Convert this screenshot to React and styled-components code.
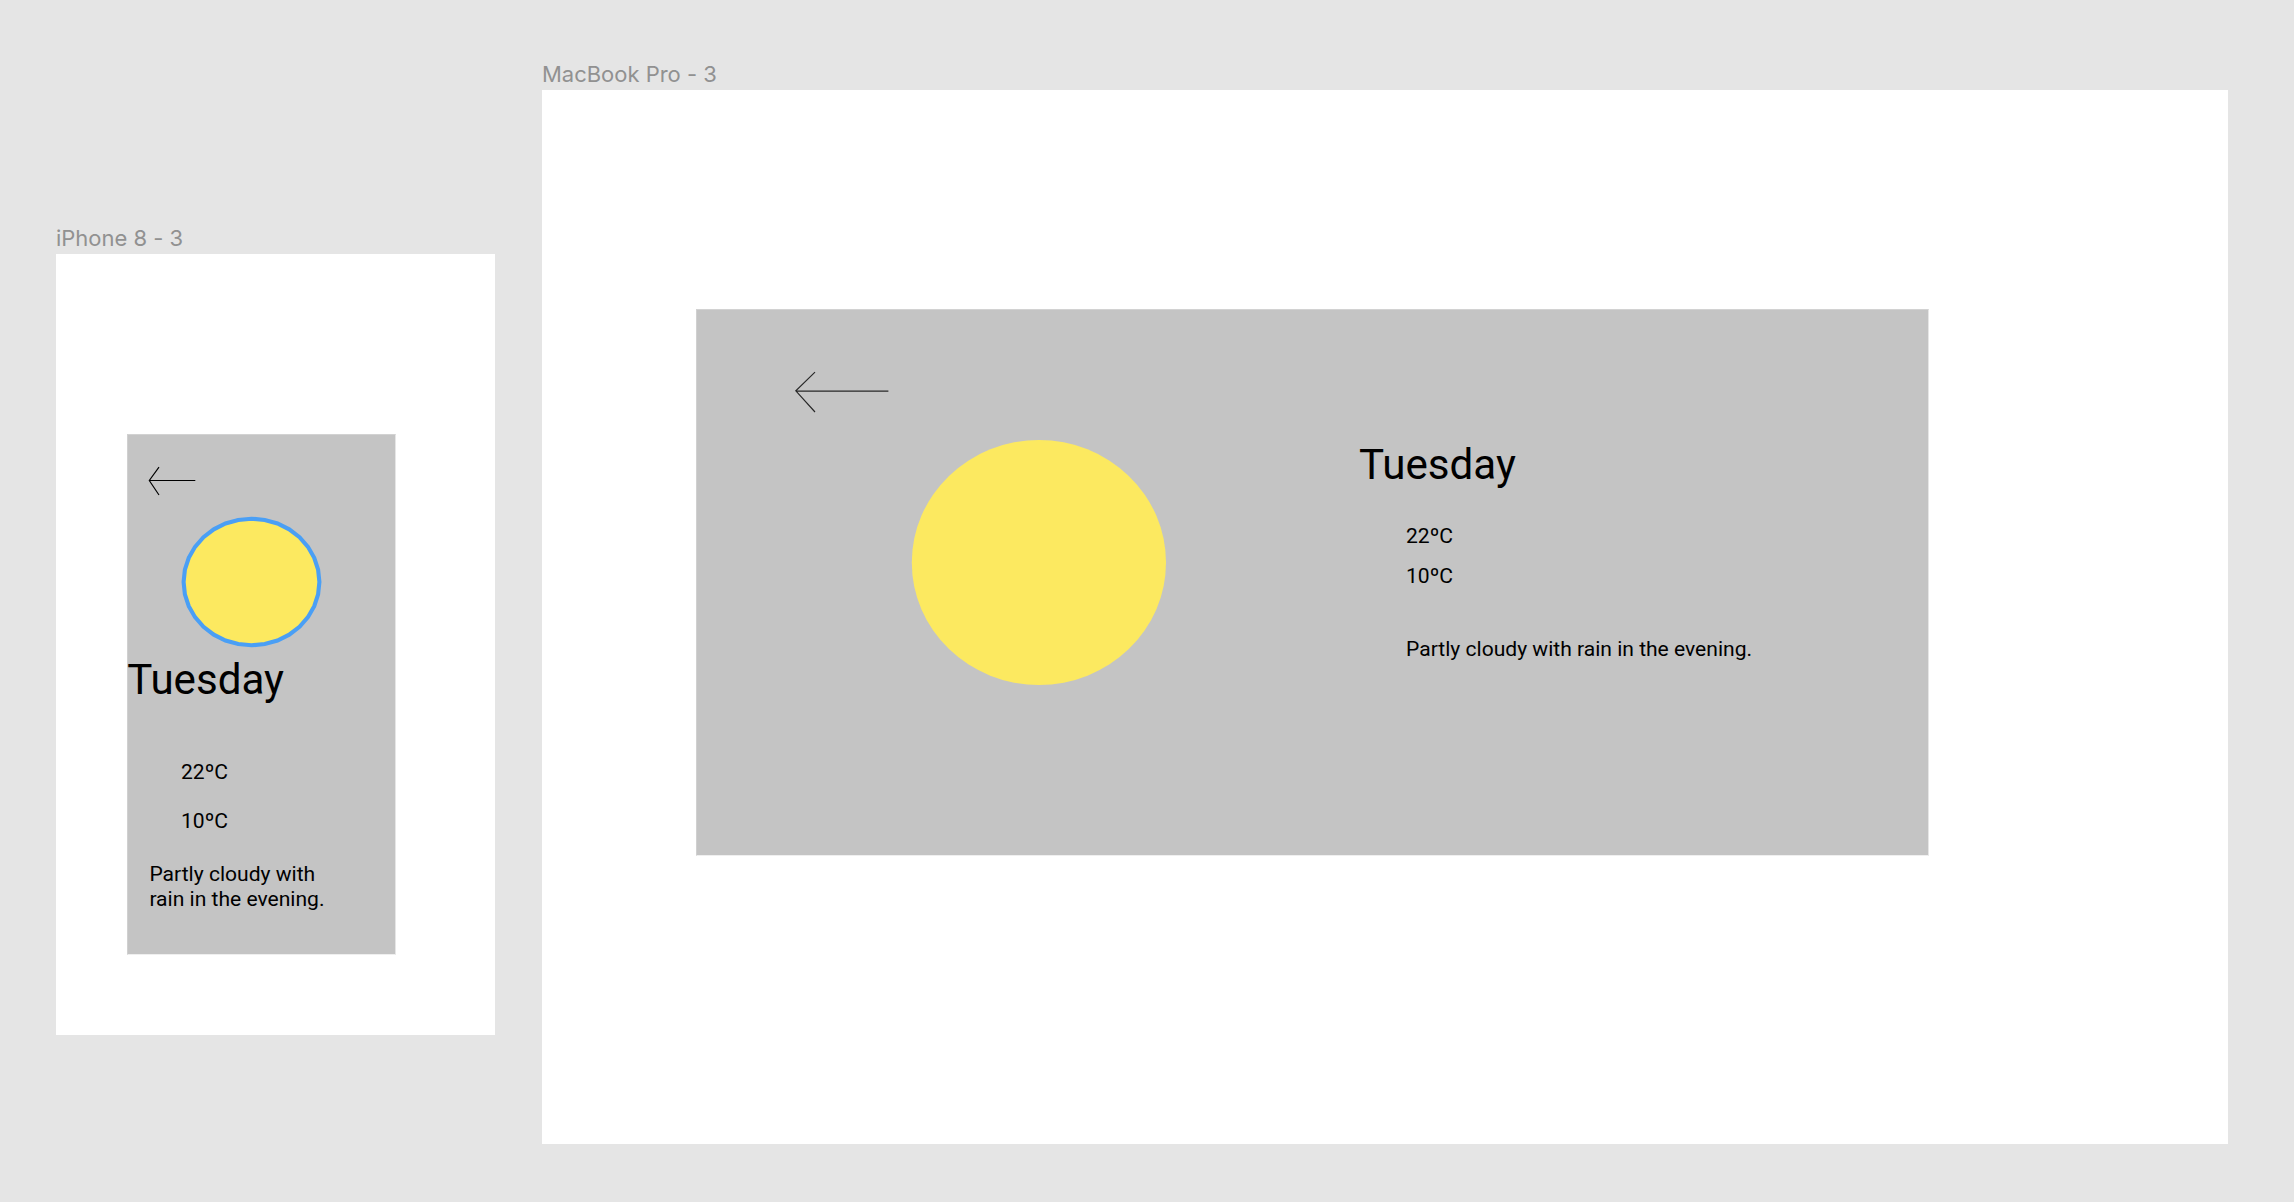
import React from "react";
import styled, { createGlobalStyle } from "styled-components";

const GlobalStyle = createGlobalStyle`
  * { box-sizing: border-box; }
  body { margin: 0; background: #e5e5e5; overflow: hidden; }
`;

const Canvas = styled.main`
  display: flex;
  align-items: flex-start;
  gap: 47px;
  height: 1202px;
  padding-left: 56px;
  background: #e5e5e5;
  font-family: Roboto, "Liberation Sans", sans-serif;
  color: #000;
`;

const Artboard = styled.section`
  flex: none;
  width: ${(p) => p.$width}px;
  padding-top: ${(p) => p.$top}px;
`;

const ArtboardLabel = styled.h2`
  margin: 0;
  height: 29px;
  font: 400 22px/27px Inter, sans-serif;
  letter-spacing: -0.02px;
  white-space: nowrap;
  color: #919191;
`;

const Frame = styled.div`
  display: flow-root;
  height: ${(p) => p.$height}px;
  background: #fff;
`;

const Card = styled.article`
  border: 1px solid;
  border-color: #d2d2d2 #e6e6e6 #efefef #d0d0d0;
  background: #c4c4c4;
`;

const PhoneCard = styled(Card)`
  display: flex;
  flex-direction: column;
  align-items: flex-start;
  width: 269px;
  height: 521px;
  margin: 180px 0 0 71px;
`;

const DesktopCard = styled(Card)`
  display: flex;
  align-items: flex-start;
  width: 1233px;
  height: 547px;
  margin: 219px 0 0 154px;
`;

const Visual = styled.div`
  display: flex;
  flex-direction: column;
  flex: none;
  width: 662px;
  padding: 60px 0 0 96px;
`;

const Drawing = styled.svg`
  display: block;
  flex: none;
  fill: none;
  margin: ${(p) => p.$margin};
`;

const Forecast = styled.div`
  display: flex;
  flex-direction: column;
  padding-top: ${(p) => p.$top}px;
`;

const Day = styled.h1`
  margin: 0 0 ${(p) => p.$gap}px ${(p) => p.$outdent || 0}px;
  font-size: 42.15px;
  line-height: 49px;
  font-weight: 400;
`;

const Temperatures = styled.div`
  display: flex;
  flex-direction: column;
  gap: ${(p) => p.$gap}px;
  padding-left: ${(p) => p.$indent}px;
`;

const Reading = styled.span`
  font-size: 21.07px;
  line-height: 25px;
`;

const Summary = styled.p`
  width: ${(p) => p.$width}px;
  margin: ${(p) => p.$margin};
  font-size: 21.07px;
  line-height: 24.7px;
`;

const outline = Array.from({ length: 32 }, (_, i) => {
  const a = (i * Math.PI) / 16;
  return `${(70.5 + 67.9 * Math.sin(a)).toFixed(2)},${(66 - 63.3 * Math.cos(a)).toFixed(2)}`;
}).join(" ");

export default function App() {
  return (
    <>
      <GlobalStyle />
      <Canvas>
        <Artboard $width={439} $top={225}>
          <ArtboardLabel>iPhone 8 - 3</ArtboardLabel>
          <Frame $height={781}>
            <PhoneCard>
              <Drawing $margin="31px 0 0 20px" width="50" height="32" stroke="#000" strokeWidth="1.17" aria-label="Back">
                <path d="M47.3 14.5H1.3M11 1.2L1.3 14.5L11 29" />
              </Drawing>
              <Drawing $margin="18px 0 0 53px" width="142" height="132">
                <ellipse cx="70.5" cy="66" rx="67.9" ry="63.3" fill="#fce960" />
                <polygon points={outline} stroke="#4a9ff5" strokeWidth="4.1" />
              </Drawing>
              <Forecast $top={7}>
                <Day $gap={55} $outdent={-0.8}>Tuesday</Day>
                <Temperatures $gap={24} $indent={53}>
                  <Reading>22ºC</Reading>
                  <Reading>10ºC</Reading>
                </Temperatures>
                <Summary $width={190} $margin="29px 0 0 21.4px">
                  Partly cloudy with rain in the evening.
                </Summary>
              </Forecast>
            </PhoneCard>
          </Frame>
        </Artboard>
        <Artboard $width={1686} $top={61}>
          <ArtboardLabel>MacBook Pro - 3</ArtboardLabel>
          <Frame $height={1054}>
            <DesktopCard>
              <Visual>
                <Drawing $margin="0" width="98" height="46" stroke="#000" strokeOpacity="0.8" strokeWidth="1.17" aria-label="Back">
                  <path d="M95.4 21.2L2.8 20.8M22 2.2L2.8 20.8L22 42" />
                </Drawing>
                <Drawing $margin="23px 0 0 117px" width="257" height="247">
                  <ellipse cx="128.9" cy="123.5" rx="127.1" ry="122.5" fill="#fce960" />
                </Drawing>
              </Visual>
              <Forecast $top={130}>
                <Day $gap={34}>Tuesday</Day>
                <Temperatures $gap={15} $indent={47}>
                  <Reading>22ºC</Reading>
                  <Reading>10ºC</Reading>
                </Temperatures>
                <Summary $width={400} $margin="49px 0 0 47px">
                  Partly cloudy with rain in the evening.
                </Summary>
              </Forecast>
            </DesktopCard>
          </Frame>
        </Artboard>
      </Canvas>
    </>
  );
}
